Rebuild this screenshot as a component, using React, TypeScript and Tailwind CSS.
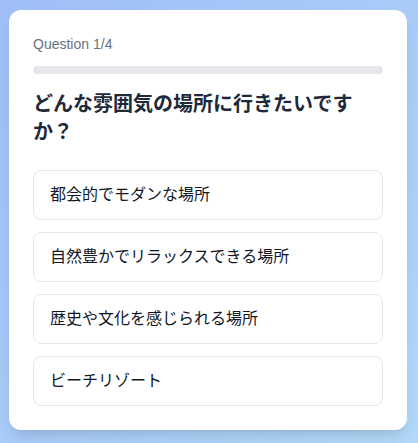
import { useState } from 'react';

const options = [
  '都会的でモダンな場所',
  '自然豊かでリラックスできる場所',
  '歴史や文化を感じられる場所',
  'ビーチリゾート',
];

export default function App() {
  const [selected, setSelected] = useState<number | null>(null);
  const current = 0;
  const total = 4;

  return (
    <div
      className="min-h-[443px] w-[418px] bg-gradient-to-br from-[#9fbef7] to-[#b2d9f9] pt-[10px] pl-[9px]"
      style={{ fontFamily: '"Liberation Sans", "Noto Sans CJK JP", sans-serif' }}
    >
      <div className="w-[398px] bg-white rounded-xl shadow-lg p-6">
        <p className="text-sm text-gray-500 mb-3">
          Question {current + 1}/{total}
        </p>
        <div className="h-2 w-full bg-gray-200 rounded-full mb-4 overflow-hidden">
          <div className="h-full bg-blue-500 rounded-full" style={{ width: `${(current / total) * 100}%` }} />
        </div>
        <h2 className="text-xl font-bold text-gray-800 leading-7 mb-6">
          どんな雰囲気の場所に行きたいですか？
        </h2>
        <div className="flex flex-col gap-3">
          {options.map((opt, i) => (
            <button
              key={opt}
              onClick={() => setSelected(i)}
              className={`w-full text-left px-4 py-3 border rounded-lg text-base text-gray-900 transition-colors ${
                selected === i ? 'border-blue-500 bg-blue-50' : 'border-gray-200 hover:bg-gray-50'
              }`}
            >
              {opt}
            </button>
          ))}
        </div>
      </div>
    </div>
  );
}
